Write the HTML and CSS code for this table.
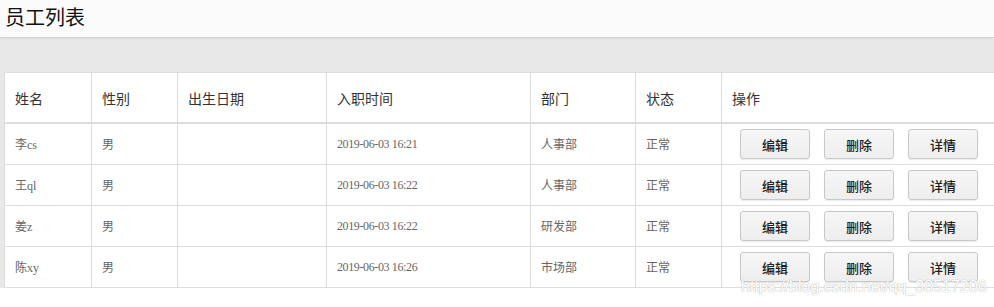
FILE: index.html
```html
<!DOCTYPE html>
<html lang="zh-CN">
<head>
<meta charset="utf-8">
<title>员工列表</title>
<link rel="stylesheet" href="styles.css">
</head>
<body>
<header class="topbar"><h1 class="title">员工列表</h1></header>
<main class="panel">
  <table class="grid">
    <colgroup>
      <col class="c-name"><col class="c-sex"><col class="c-birth"><col class="c-join"><col class="c-dept"><col class="c-state"><col class="c-ops">
    </colgroup>
    <thead>
      <tr><th>姓名</th><th>性别</th><th>出生日期</th><th>入职时间</th><th>部门</th><th>状态</th><th>操作</th></tr>
    </thead>
    <tbody>
      <tr><td>李cs</td><td>男</td><td></td><td class="time">2019-06-03 16:21</td><td>人事部</td><td>正常</td>
        <td><div class="ops"><button class="btn">编辑</button><button class="btn">删除</button><button class="btn">详情</button></div></td></tr>
      <tr><td>王ql</td><td>男</td><td></td><td class="time">2019-06-03 16:22</td><td>人事部</td><td>正常</td>
        <td><div class="ops"><button class="btn">编辑</button><button class="btn">删除</button><button class="btn">详情</button></div></td></tr>
      <tr><td>姜z</td><td>男</td><td></td><td class="time">2019-06-03 16:22</td><td>研发部</td><td>正常</td>
        <td><div class="ops"><button class="btn">编辑</button><button class="btn">删除</button><button class="btn">详情</button></div></td></tr>
      <tr><td>陈xy</td><td>男</td><td></td><td class="time">2019-06-03 16:26</td><td>市场部</td><td>正常</td>
        <td><div class="ops"><button class="btn">编辑</button><button class="btn">删除</button><button class="btn">详情</button></div></td></tr>
    </tbody>
  </table>
</main>
<div class="watermark">https://blog.csdn.net/qq_38517206</div>
</body>
</html>
```
FILE: styles.css
```css
html, body {
  margin: 0;
  padding: 0;
  background: #fff;
  overflow: hidden;
}
body {
  position: relative;
  width: 994px;
  height: 307px;
  font-family: "Noto Sans CJK SC", sans-serif;
}
.topbar {
  height: 37px;
  background: #fbfbfb;
  box-shadow: 0 1px 2px rgba(0,0,0,0.12);
  position: relative;
  z-index: 1;
}
.title {
  margin: 0;
  padding-left: 5px;
  font-size: 20px;
  font-weight: 400;
  line-height: 34px;
  color: #111;
}
.panel {
  background: #e8e8e8;
  padding: 35px 0 0 4px;
  overflow: hidden;
}
.grid {
  border-collapse: collapse;
  table-layout: fixed;
  width: 1030px;
  background: #fff;
}
.c-name { width: 87px; }
.c-sex { width: 86px; }
.c-birth { width: 149px; }
.c-join { width: 204px; }
.c-dept { width: 105px; }
.c-state { width: 86px; }
.c-ops { width: 313px; }
.grid th, .grid td {
  border: 1px solid #ddd;
  text-align: left;
  padding: 0 0 0 10px;
  white-space: nowrap;
}
.grid th {
  height: 49px;
  font-size: 14px;
  font-weight: 400;
  color: #333;
  border-bottom: 2px solid #ddd;
}
.grid td {
  height: 40px;
  font-family: "Liberation Serif", "Noto Sans CJK SC", serif;
  font-size: 12px;
  color: #666;
}
.grid td.time {
  letter-spacing: -0.38px;
}
.ops {
  display: flex;
  gap: 14px;
  padding-left: 8px;
}
.btn {
  width: 70px;
  height: 30px;
  padding: 0;
  font-family: "Noto Sans CJK SC", sans-serif;
  font-size: 13px;
  font-weight: 500;
  color: #222;
  background: linear-gradient(#f6f6f6, #eeeeee);
  border: 1px solid #c8c8c8;
  border-radius: 3px;
  box-shadow: 0 1px 1px rgba(0,0,0,0.08);
}
.watermark {
  position: absolute;
  left: 741px;
  top: 278px;
  font-family: "Liberation Sans", sans-serif;
  font-size: 16px;
  color: #fff;
  text-shadow: 0 0 1px #bbb, 0 0 1px #bbb;
  white-space: nowrap;
}
```
